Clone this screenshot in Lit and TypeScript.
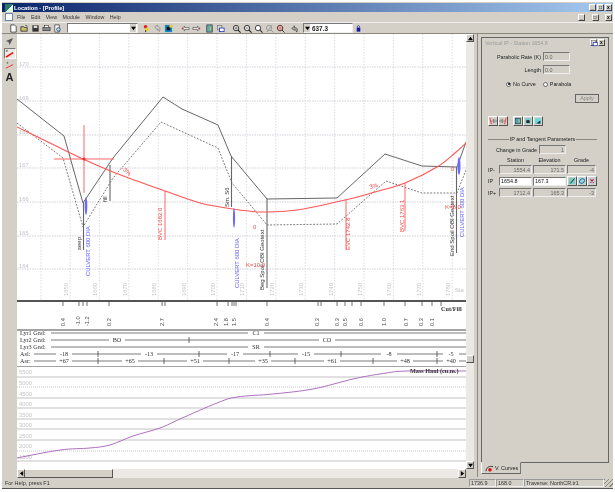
import {LitElement, html, svg, css} from 'lit';
import {customElement} from 'lit/decorators.js';

const ground = '17,99 64,136 83,203 113,158 163,97 182,109 218,125 231,156 267,199 337,198 385,154 422,166 457,167 466,142';
const original = '17,123 63,158 83,227 113,178 161,122 218,148 232,183 267,225 337,224 386,181 422,193 457,193 466,170';
const design = [[17, 127], [50, 143], [83, 159], [113, 172], [140, 182], [165, 191], [200, 203], [233, 209], [263, 212], [297, 210], [345, 200], [375, 192], [405, 183], [437, 167], [455, 153], [466, 143]];
const haul = [[17, 458], [60, 450], [90, 448], [110, 445], [133, 436], [160, 428], [180, 419], [217, 403], [237, 397], [273, 394], [313, 389], [353, 379], [380, 374], [407, 371], [466, 371]];

const stations = [1650, 1660, 1670, 1680, 1690, 1700, 1710, 1720, 1730, 1740, 1750, 1760, 1770, 1780];
const elevations = [[170, 67], [169, 101], [168, 135], [167, 168], [166, 202], [165, 236], [164, 269]];
const massLabels = [[5500, 374], [5000, 385], [4500, 396], [4000, 406], [3500, 417], [3000, 427], [2500, 438], [2000, 448], [1500, 459]];

// x, bottom y, text
const blueLabels: [number, number, string][] = [[90, 276, 'CULVERT 600 DIA'], [239, 288, 'CULVERT 600 DIA'], [464, 237, 'CULVERT 600 DIA']];
const blackLabels: [number, number, string][] = [[81, 250, 'seep'], [107, 202, 'fill'], [229, 207, 'Sm. S6'], [264, 290, 'Beg Spoil OBI Geotext'], [454, 256, 'End Spoil OBI Geotext']];
const redLabels: [number, number, string][] = [[162, 240, 'BVC 1682.0'], [350, 250, 'EVC 1742.8'], [404, 232, 'BVC 1763.1']];

const cutFill: [number, string][] = [[63, '0.4'], [78, '-1.0'], [87, '-1.2'], [109, '0.2'], [162, '2.7'], [216, '2.4'], [226, '1.8'], [234, '1.5'], [267, '0.4'], [317, '0.3'], [337, '0.3'], [345, '0.5'], [361, '0.6'], [384, '1.0'], [406, '0.7'], [421, '0.3'], [432, '0.1']];
const cutTicks = [63, 79, 83, 87, 109, 162, 165, 217, 228, 232, 234, 236, 267, 318, 321, 337, 345, 352, 361, 384, 405, 422, 432, 441];

const layerRows: {y: number; label: string; from: number; parts: [number, string][]; ticks: number[]}[] = [
  {y: 333, label: 'Lyr1 Gnd:', from: 51, parts: [[256, 'C1']], ticks: []},
  {y: 340, label: 'Lyr2 Gnd:', from: 51, parts: [[117, 'BO'], [327, 'CO']], ticks: [189]},
  {y: 347, label: 'Lyr3 Gnd:', from: 51, parts: [[256, 'SR']], ticks: []},
  {y: 354, label: 'Asl:', from: 34, parts: [[64, '-18'], [149, '-13'], [235, '-17'], [306, '-15'], [389, '-8'], [451, '-5']], ticks: [98, 199, 270, 341, 437]},
  {y: 361, label: 'Asr:', from: 34, parts: [[64, '+67'], [130, '+65'], [195, '+51'], [263, '+35'], [332, '+61'], [405, '+48'], [451, '+40']], ticks: [98, 164, 229, 295, 373, 437]},
];

// smooth line through the points
function smooth(p: number[][]) {
  let d = `M${p[0][0]} ${p[0][1]}`;
  for (let i = 0; i < p.length - 1; i++) {
    const a = p[Math.max(i - 1, 0)];
    const b = p[i];
    const c = p[i + 1];
    const e = p[Math.min(i + 2, p.length - 1)];
    d += `C${b[0] + (c[0] - a[0]) / 6} ${b[1] + (c[1] - a[1]) / 6} ${c[0] - (e[0] - b[0]) / 6} ${c[1] - (e[1] - b[1]) / 6} ${c[0]} ${c[1]}`;
  }
  return d;
}

const glyphs: Record<string, unknown> = {
  new: svg`<path d="M2 1h4l2 2v6H2z" fill="#fff" stroke="#222" stroke-width=".8"/>`,
  open: svg`<path d="M1 8V3h3l1 1h3v4z" fill="#c9c26a" stroke="#222" stroke-width=".8"/><path d="M6 1.500l2.500 1" stroke="#222" stroke-width=".8"/>`,
  save: svg`<rect x="1.500" y="1.500" width="7" height="7" fill="#333"/><rect x="3" y="2" width="4" height="2.500" fill="#ddd"/>`,
  print: svg`<rect x="1" y="4" width="8" height="3.500" fill="#888" stroke="#222" stroke-width=".6"/><rect x="3" y="1.500" width="4" height="2.500" fill="#fff" stroke="#222" stroke-width=".6"/>`,
  preview: svg`<path d="M2 1h5v8H2z" fill="#fff" stroke="#222" stroke-width=".7"/><circle cx="6" cy="6" r="2" fill="#bde" stroke="#135" stroke-width=".8"/>`,
  tag: svg`<circle cx="4" cy="3" r="2" fill="#e02020"/><circle cx="5.500" cy="6" r="2" fill="#f0d020"/><path d="M4 7v2" stroke="#222"/>`,
  undo: svg`<path d="M2 3l3-2v1.500c3 0 3.500 3 2 6-.5-2.500-1-3-2-3V7z" fill="#ccc" stroke="#777" stroke-width=".6"/>`,
  colors: svg`<rect x="1" y="1" width="8" height="8" fill="#18c"/><rect x="3" y="3" width="4" height="4" fill="#111"/><rect x="6" y="1" width="3" height="3" fill="#ec2"/>`,
  left: svg`<path d="M1 5l3-2.500V4h5v2H4v1.500z" fill="#fff" stroke="#222" stroke-width=".6"/><path d="M1 5h2" stroke="#e02020"/>`,
  right: svg`<path d="M9 5L6 2.500V4H1v2h5v1.500z" fill="#fff" stroke="#222" stroke-width=".6"/><path d="M7 5h2" stroke="#e02020"/>`,
  pages: svg`<rect x="2" y="1" width="6" height="8" fill="#6aa" stroke="#223" stroke-width=".7"/><path d="M6 3v4" stroke="#dc3"/>`,
  windows: svg`<rect x="1.500" y="1.500" width="5" height="5" fill="#ddd" stroke="#555" stroke-width=".6"/><rect x="4" y="4.500" width="5" height="4" fill="#fff" stroke="#12a" stroke-width=".8"/>`,
  zoomIn: svg`<circle cx="4.500" cy="4.500" r="3" fill="#eee" stroke="#222"/><path d="M6.500 6.500l3 3" stroke="#222" stroke-width="1.200"/><path d="M3 4.500h3M4.500 3v3" stroke="#222" stroke-width=".6"/>`,
  zoomOut: svg`<circle cx="4.500" cy="4.500" r="3" fill="#eee" stroke="#222"/><path d="M6.500 6.500l3 3" stroke="#222" stroke-width="1.200"/><path d="M3 4.500h3" stroke="#222" stroke-width=".6"/>`,
  zoom: svg`<circle cx="4.500" cy="4.500" r="3" fill="#fff" stroke="#333"/><path d="M6.500 6.500l3 3" stroke="#333" stroke-width="1.200"/>`,
  zoomOff: svg`<circle cx="4.500" cy="4.500" r="3" fill="none" stroke="#999"/><path d="M6.500 6.500l3 3M8 1L2 9" stroke="#999"/>`,
  zoomAll: svg`<circle cx="4.500" cy="4.500" r="3" fill="#fff" stroke="#222"/><path d="M1 4.500h7M4.500 1v7" stroke="#d02020" stroke-width=".8"/><path d="M6.500 6.500l3 3" stroke="#222"/>`,
  back: svg`<path d="M2 5l3-3v2c3 0 4 2 2.500 5-.5-2-1-2.500-2.500-2.500V7z" fill="#aaa" stroke="#222" stroke-width=".6"/>`,
  lock: svg`<rect x="3" y="4" width="4" height="4.500" fill="#1a1aa0"/><path d="M3.800 4V3a1.200 1.200 0 0 1 2.400 0v1" fill="none" stroke="#1a1aa0" stroke-width=".7"/>`,
  pointer: svg`<path d="M9 1L1 4.500l3 1 1 3.500z" fill="#555"/>`,
  redLine: svg`<path d="M1 9l8-5" stroke="#f00" stroke-width="1.500"/><path d="M1 1h2v2H1z" fill="#777"/>`,
  redThin: svg`<path d="M1 8l8-4" stroke="#f22" stroke-width="1"/><path d="M2 1h1.500v2H2z" fill="#777"/>`,
  ipLeft: svg`<path d="M1 1l2 8" stroke="#f22"/><path d="M3 5l3-2v4z M6 4h3v2H6z" fill="#fff" stroke="#222" stroke-width=".5"/>`,
  ipRight: svg`<path d="M9 1L7 9" stroke="#f22"/><path d="M7 5L4 3v4z M4 4H1v2h3z" fill="#fff" stroke="#222" stroke-width=".5"/>`,
  book: svg`<rect x="2" y="1.500" width="6" height="7" fill="#4ab" stroke="#123" stroke-width=".7"/><path d="M6.500 3v4" stroke="#fc3"/>`,
  cam: svg`<rect x="1.500" y="1.500" width="7" height="7" fill="#7cc"/><rect x="3" y="4" width="4" height="3.500" fill="#222"/>`,
  cam2: svg`<rect x="1.500" y="1.500" width="7" height="7" fill="#6dd"/><path d="M3 8h5V4.500z" fill="#123"/>`,
  edit: svg`<rect x="1" y="1" width="8" height="8" fill="#7cc"/><path d="M3 8l5-6" stroke="#222" stroke-width="1.200"/><path d="M2 3h2" stroke="#dc2"/>`,
  cycle: svg`<rect x="1" y="1" width="8" height="8" fill="#9dd"/><path d="M2.500 7.500A3.500 3.500 0 0 1 7 2.500M7.500 2.500A3.500 3.500 0 0 1 3 7.500" fill="none" stroke="#137" stroke-width="1"/>`,
  cross: svg`<rect x="1" y="1" width="8" height="8" fill="#bcd"/><path d="M3 3l4 4M7 3L3 7" stroke="#d01818" stroke-width="1.400"/>`,
  curves: svg`<path d="M1 8C2 3 5 2 9 3" fill="none" stroke="#222" stroke-width="1"/><circle cx="5.500" cy="6.500" r="2" fill="#e01010"/>`,
};

const icon = (name: string) => html`<svg class="glyph" viewBox="0 0 10 10">${glyphs[name]}</svg>`;
const cell = (name: string) => html`<span class="cell">${icon(name)}</span>`;
const tool = (name: string) => html`<span class="tool">${icon(name)}</span>`;
const arrow = (d: string) => html`<svg class="arrow" viewBox="0 0 6 6"><path d=${d} fill="#000"/></svg>`;
const vtext = (x: number, y: number, t: string, cls: string) =>
  svg`<text class=${cls} transform="translate(${x} ${y}) rotate(-90)">${t}</text>`;

@customElement('app-root')
export class AppRoot extends LitElement {
  static styles = css`
    :host {
      display: block;
      width: 615px;
      height: 492px;
      background: #fff;
      overflow: hidden;
      font-family: "Liberation Sans", Arial, sans-serif;
      font-size: 5.400px;
      color: #222;
    }
    .win {
      width: 611px;
      height: 486px;
      margin: 2px 0 0 2px;
      background: #d4d0c8;
      border-bottom: 1px solid #555;
      display: flex;
      flex-direction: column;
      filter: blur(0.3px);
    }
    .title {
      height: 9px;
      margin-top: 1px;
      background: linear-gradient(90deg, #0a246a, #a6caf0);
      color: #fff;
      font-weight: bold;
      font-size: 5.700px;
      display: flex;
      align-items: center;
      padding: 0 1px 0 3px;
    }
    .logo { width: 8px; height: 8px; margin-right: 1px; background: linear-gradient(135deg, #2a7a6a 50%, #dfe 50%); }
    .spacer { flex: 1; }
    .capbtn {
      width: 7px;
      height: 7px;
      margin-left: 1px;
      background: #d4d0c8;
      border: 1px solid;
      border-color: #fff #444 #444 #fff;
      box-sizing: border-box;
      font-size: 5px;
      line-height: 5px;
      text-align: center;
      color: #000;
      font-weight: bold;
      overflow: hidden;
    }
    .menu {
      height: 10px;
      display: flex;
      align-items: center;
      gap: 5.500px;
      padding: 0 1px 0 3px;
      color: #333;
      font-size: 5.300px;
    }
    .menu .doc { width: 8px; height: 8px; margin-right: -1.500px; background: #fff; border: 1px solid #68a; box-sizing: border-box; }
    .bar {
      height: 12px;
      box-sizing: border-box;
      display: flex;
      align-items: center;
      padding-left: 6px;
      border-top: 1px solid #f2f0ec;
      border-bottom: 1px solid #8a877f;
    }
    .cell { width: 11px; height: 10px; display: flex; align-items: center; justify-content: center; flex: none; }
    .glyph { width: 9px; height: 9px; display: block; flex: none; }
    .combo {
      height: 10px;
      background: #fff;
      border: 1px solid;
      border-color: #777 #eee #eee #777;
      box-sizing: border-box;
      display: flex;
      justify-content: flex-end;
      align-items: stretch;
      flex: none;
    }
    .combo.wide { width: 71px; margin: 0 3px 0 4px; }
    .combo.num { width: 50px; margin-left: 3px; justify-content: flex-start; font-weight: bold; font-size: 6.400px; color: #222; align-items: center; }
    .combo .drop { width: 6px; background: #d4d0c8; display: flex; align-items: center; justify-content: center; margin-right: 1px; }
    .combo.num .drop { margin: 0 2px 0 0; align-self: stretch; }
    .arrow { width: 5px; height: 5px; display: block; }
    .g6 { margin-left: 6px; }
    .g2 { margin-left: 2px; }
    .g5 { margin-left: 5px; }
    .g3 { margin-left: 3px; }
    .main { flex: 1; display: flex; min-height: 0; }
    .tools { width: 15px; flex: none; display: flex; flex-direction: column; align-items: center; padding-top: 2px; gap: 1px; box-sizing: border-box; }
    .tool { width: 12px; height: 11px; background: #d4d0c8; display: flex; align-items: center; justify-content: center; }
    .tool:nth-child(2) { background: #ebe9e4; border: 1px solid; border-color: #777 #fff #fff #777; box-sizing: border-box; }
    .tool.type { font-size: 11px; height: 9px; font-weight: bold; color: #222; }
    .center { width: 457px; flex: none; display: flex; flex-direction: column; }
    .canvas-row { height: 435px; display: flex; }
    .canvas { width: 449px; background: #fff; display: flex; flex-direction: column; }
    .band { display: block; width: 449px; flex: none; box-sizing: content-box; }
    .b-profile { height: 266px; }
    .b-cut { height: 27px; border-top: 2px solid #555; }
    .b-layers { height: 35px; border-top: 2px solid #a4a4a4; }
    .b-haul { height: 102px; border-top: 1px solid #a4a4a4; }
    .vscroll { width: 8px; background: #ece9e4; display: flex; flex-direction: column; }
    .sbtn {
      background: #d4d0c8;
      border: 1px solid;
      border-color: #fff #555 #555 #fff;
      box-sizing: border-box;
      display: flex;
      align-items: center;
      justify-content: center;
      flex: none;
    }
    .vscroll .sbtn { width: 8px; height: 8px; }
    .vscroll .track { height: 313px; flex: none; }
    .vscroll .fill { flex: 1; }
    .hscroll { height: 9px; display: flex; background: #ece9e4; width: 449px; }
    .hscroll .sbtn { width: 8px; height: 9px; }
    .thumb { width: 88px; flex: none; background: #d4d0c8; border-right: 1px solid #555; border-bottom: 1px solid #555; border-top: 1px solid #fff; box-sizing: border-box; }
    .hscroll .fill { flex: 1; }
    .panel {
      flex: 1;
      padding: 3px 4px 0 3px;
      display: flex;
      flex-direction: column;
      border-left: 1px solid #888;
      margin-left: 3px;
      box-sizing: border-box;
    }
    .frame {
      height: 426px;
      width: 128px;
      border: 1px solid #666;
      box-sizing: border-box;
      padding: 0 3px;
      display: flex;
      flex-direction: column;
    }
    .cap { height: 9px; display: flex; align-items: center; color: #9a9a9a; font-size: 5.300px; }
    .form { display: grid; grid-template-columns: 56px 27px; column-gap: 2px; row-gap: 4px; align-items: center; justify-items: end; margin-top: 5px; }
    .form .lbl { white-space: nowrap; }
    .box {
      height: 9px;
      box-sizing: border-box;
      border: 1px solid;
      border-color: #777 #eee #eee #777;
      background: #d4d0c8;
      color: #666;
      display: flex;
      align-items: center;
      padding: 0 1px;
      width: 100%;
    }
    .box.r { justify-content: flex-end; }
    .box.w { background: #fff; color: #111; }
    .radios { display: flex; margin: 7px 0 0 21px; align-items: center; }
    .radio { width: 5px; height: 5px; border-radius: 50%; background: #fff; border: 1px solid #666; box-sizing: border-box; margin-right: 2px; display: flex; align-items: center; justify-content: center; }
    .radio i { width: 2px; height: 2px; border-radius: 50%; background: #000; }
    .radios span + .radio { margin-left: 7px; }
    .apply {
      align-self: flex-end;
      width: 24px;
      height: 9px;
      margin: 7px 6px 0 0;
      border: 1px solid;
      border-color: #fff #333 #333 #fff;
      outline: 1px solid #666;
      outline-offset: -1px;
      box-sizing: border-box;
      text-align: center;
      line-height: 7px;
      color: #888;
    }
    .ibar { display: flex; margin: 13px 0 0 3px; }
    .ibtn { width: 10px; height: 10px; display: flex; align-items: center; justify-content: center; background: #d4d0c8; border: 1px solid; border-color: #fff #555 #555 #fff; box-sizing: border-box; flex: none; }
    .ibtn.small { width: 7px; height: 7px; }
    .ibtn .glyph { width: 8px; height: 8px; }
    .ibar .gap { width: 5px; }
    .section { display: flex; align-items: center; margin: 10px 8px 0 3px; gap: 1px; white-space: nowrap; }
    .section i { flex: 1; height: 1px; background: #8a877f; }
    .form.grade { grid-template-columns: 52px 27px; margin-top: 3px; }
    .params { display: grid; grid-template-columns: 10px 33px 33px 29px; column-gap: 1px; row-gap: 2px; margin: 3px 0 0 3px; align-items: center; }
    .params .h { text-align: center; }
    .params .tri { display: flex; }
    .tabs { height: 12px; display: flex; }
    .tab {
      width: 40px;
      height: 12px;
      border: 1px solid;
      border-color: transparent #777 #666 #fff;
      box-sizing: border-box;
      display: flex;
      align-items: center;
      gap: 1px;
      padding-left: 3px;
      margin-top: -1px;
      background: #d4d0c8;
      white-space: nowrap;
    }
    .status { height: 11px; display: flex; align-items: center; padding-left: 3px; color: #333; }
    .status .msg { flex: 1; }
    .sunk { height: 8px; border: 1px solid; border-color: #999 #eee #eee #999; box-sizing: border-box; display: flex; align-items: center; padding-left: 1px; }
    .s1 { width: 27px; }
    .s2 { width: 28px; }
    .s3 { width: 80px; }
    .grip { width: 9px; height: 8px; background: repeating-linear-gradient(135deg, #8a877f 0 1px, #d4d0c8 1px 3px); }
    text { font-family: "Liberation Sans", Arial, sans-serif; }
    .t { font-size: 6px; }
    .gridlbl { font-size: 5.800px; fill: #c4c4c4; }
    .blk { fill: #333; }
    .blu { fill: #5a5aff; font-size: 5.900px; }
    .red { fill: #f34a4a; }
    .cf { font-size: 5.600px; fill: #444; }
    .lay { font-family: "Liberation Serif", serif; font-size: 6.200px; fill: #333; }
  `;

  renderProfile() {
    return html`<svg class="band b-profile" viewBox="17 34 449 266">
      ${stations.map((_, i) => svg`<line x1=${70 + i * 29.4} x2=${70 + i * 29.4} y1="34" y2="300" stroke="#cfcfd6" stroke-width=".7" stroke-dasharray="1.500 1.500"/>`)}
      <line x1="41" x2="41" y1="34" y2="300" stroke="#cfcfd6" stroke-width=".7" stroke-dasharray="1.500 1.500"/>
      ${elevations.map(([lbl, y]) => svg`
        <line x1="17" x2="466" y1=${y} y2=${y} stroke="#c6c6d0" stroke-width=".8" stroke-dasharray="1.500 1"/>
        <text class="gridlbl" x="19" y=${y - 1}>${lbl}</text>`)}
      ${stations.map((s, i) => vtext(68 + i * 29.4, 296, String(s), 'gridlbl'))}
      <text class="gridlbl" x="455" y="292">Sta</text>

      <polyline points=${original} fill="none" stroke="#555" stroke-width=".8" stroke-dasharray="1.800 1.500"/>
      <polyline points=${ground} fill="none" stroke="#555" stroke-width=".9"/>

      <g stroke="#666" stroke-width="1.100">
        <line x1="83.500" x2="83.500" y1="203" y2="250"/>
        <line x1="110" x2="110" y1="165" y2="201"/>
        <line x1="231.500" x2="231.500" y1="156" y2="207"/>
        <line x1="267" x2="267" y1="199" y2="288"/>
        <line x1="456.500" x2="456.500" y1="167" y2="253"/>
      </g>

      <path d=${smooth(design)} fill="none" stroke="#f55" stroke-width="1.100"/>
      <g stroke="#f55" stroke-width=".9">
        <line x1="84" x2="84" y1="125" y2="193"/>
        <line x1="54" x2="114" y1="159" y2="159"/>
        <line x1="165" x2="165" y1="191" y2="240"/>
        <line x1="346" x2="346" y1="200" y2="250"/>
        <line x1="405" x2="405" y1="183" y2="231"/>
      </g>
      <circle cx="84" cy="159" r="1.500" fill="#f22"/>

      <g fill="#6a6aff">
        <ellipse cx="86" cy="206" rx="1.300" ry="9"/>
        <ellipse cx="234" cy="218" rx="1.100" ry="10"/>
        <ellipse cx="459" cy="166" rx="1.500" ry="9"/>
      </g>

      ${blackLabels.map(([x, y, t]) => vtext(x, y, t, 't blk'))}
      ${blueLabels.map(([x, y, t]) => vtext(x, y, t, 't blu'))}
      ${redLabels.map(([x, y, t]) => vtext(x, y, t, 't red'))}
      <text class="t red" transform="translate(121 169) rotate(40)">-3%</text>
      <text class="t red" transform="translate(370 189) rotate(-15)">3%</text>
      <text class="t red" x="246" y="267">K=10.0</text>
      <text class="t red" x="445" y="209">K=8.0</text>
      <text class="t red" x="253" y="229">0</text>
      <text class="t red" x="451" y="171">0</text>
    </svg>`;
  }

  renderCutFill() {
    return html`<svg class="band b-cut" viewBox="17 302 449 27">
      ${cutTicks.map((x) => svg`<line x1=${x} x2=${x} y1="302" y2="306" stroke="#333" stroke-width=".7"/>`)}
      ${cutFill.map(([x, t]) => vtext(x + 2, 326, t, 'cf'))}
      <text class="lay" x="441" y="311" font-weight="bold">Cut/Fill</text>
    </svg>`;
  }

  renderLayers() {
    return html`<svg class="band b-layers" viewBox="17 331 449 35">
      ${layerRows.map((r) => svg`
        <text class="lay" x="20" y=${r.y + 2}>${r.label}</text>
        <line x1=${r.from} x2="466" y1=${r.y} y2=${r.y} stroke="#444" stroke-width=".7"/>
        ${r.parts.map(([x, t]) => svg`
          <rect x=${x - 8} y=${r.y - 3} width="16" height="6" fill="#fff"/>
          <text class="lay" x=${x} y=${r.y + 2} text-anchor="middle">${t}</text>`)}
        ${r.ticks.map((x) => svg`<line x1=${x} x2=${x} y1=${r.y - 3} y2=${r.y + 3} stroke="#444" stroke-width=".8"/>`)}`)}
    </svg>`;
  }

  renderHaul() {
    const solid = [377, 398, 408, 419, 429, 440, 461];
    const dotted = [387, 451];
    return html`<svg class="band b-haul" viewBox="17 367 449 102">
      ${solid.map((y) => svg`<line x1="17" x2="466" y1=${y} y2=${y} stroke="#c2c2c2" stroke-width="1"/>`)}
      ${dotted.map((y) => svg`<line x1="17" x2="466" y1=${y} y2=${y} stroke="#bbb" stroke-width=".8" stroke-dasharray="1 1"/>`)}
      ${massLabels.map(([v, y]) => svg`<text class="gridlbl" x="19" y=${y}>${v}</text>`)}
      <path d=${smooth(haul)} fill="none" stroke="#b070c0" stroke-width="1"/>
      <text class="lay" x="410" y="373" font-weight="bold">Mass Haul (cu.m.)</text>
    </svg>`;
  }

  renderPanel() {
    const rows: [string, string, string, string][] = [
      ['IP-', '1554.4', '171.5', '-4'],
      ['IP+', '1712.4', '165.3', '-3'],
    ];
    const readonly = (r: [string, string, string, string]) => html`
      <span>${r[0]}</span>
      <span class="box r">${r[1]}</span>
      <span class="box r">${r[2]}</span>
      <span class="box r">${r[3]}</span>`;
    return html`<div class="panel">
      <div class="frame">
        <div class="cap">
          Vertical IP - Station 1654.8
          <span class="spacer"></span>
          <span class="ibtn small">${icon('windows')}</span>
          <span class="capbtn">x</span>
        </div>
        <div class="form">
          <span class="lbl">Parabolic Rate (K)</span><span class="box">0.0</span>
          <span class="lbl">Length</span><span class="box">0.0</span>
        </div>
        <div class="radios">
          <span class="radio"><i></i></span><span>No Curve</span>
          <span class="radio"></span><span>Parabola</span>
        </div>
        <div class="apply">Apply</div>
        <div class="ibar">
          <span class="ibtn">${icon('ipLeft')}</span><span class="ibtn">${icon('ipRight')}</span>
          <span class="gap"></span>
          <span class="ibtn">${icon('book')}</span><span class="ibtn">${icon('cam')}</span><span class="ibtn">${icon('cam2')}</span>
        </div>
        <div class="section"><i></i>IP and Tangent Parameters<i></i></div>
        <div class="form grade">
          <span class="lbl">Change in Grade</span><span class="box r">1</span>
        </div>
        <div class="params">
          <span></span><span class="h">Station</span><span class="h">Elevation</span><span class="h">Grade</span>
          ${readonly(rows[0])}
          <span>IP</span>
          <span class="box w">1654.8</span>
          <span class="box w">167.3</span>
          <span class="tri"><span class="ibtn">${icon('edit')}</span><span class="ibtn">${icon('cycle')}</span><span class="ibtn">${icon('cross')}</span></span>
          ${readonly(rows[1])}
        </div>
      </div>
      <div class="tabs">
        <div class="tab">${icon('curves')}<span>V. Curves</span></div>
      </div>
    </div>`;
  }

  render() {
    return html`<div class="win">
      <div class="title">
        <span class="logo"></span>Location - [Profile]
        <span class="spacer"></span>
        <span class="capbtn">_</span><span class="capbtn">□</span><span class="capbtn">x</span>
      </div>
      <div class="menu">
        <span class="doc"></span>
        <span>File</span><span>Edit</span><span>View</span><span>Module</span><span>Window</span><span>Help</span>
        <span class="spacer"></span>
        <span class="capbtn">_</span><span class="capbtn">□</span><span class="capbtn">x</span>
      </div>
      <div class="bar">
        ${['new', 'open', 'save', 'print', 'preview'].map(cell)}
        <span class="combo wide"><span class="drop">${arrow('M0 1h6L3 5z')}</span></span>
        ${['tag', 'undo', 'colors'].map(cell)}
        <span class="g6"></span>${['left', 'right'].map(cell)}
        <span class="g2"></span>${['pages', 'windows'].map(cell)}
        <span class="g5"></span>${['zoomIn', 'zoomOut', 'zoom', 'zoomOff', 'zoomAll'].map(cell)}
        <span class="g3"></span>${cell('back')}
        <span class="combo num"><span class="drop">${arrow('M0 1h6L3 5z')}</span>637.3</span>
        ${cell('lock')}
      </div>
      <div class="main">
        <div class="tools">
          ${tool('pointer')}${tool('redLine')}${tool('redThin')}
          <span class="tool type">A</span>
        </div>
        <div class="center">
          <div class="canvas-row">
            <div class="canvas">
              ${this.renderProfile()}
              ${this.renderCutFill()}
              ${this.renderLayers()}
              ${this.renderHaul()}
            </div>
            <div class="vscroll">
              <span class="sbtn">${arrow('M0 5h6L3 1z')}</span>
              <span class="track"></span>
              <span class="sbtn"></span>
              <span class="fill"></span>
              <span class="sbtn">${arrow('M0 1h6L3 5z')}</span>
            </div>
          </div>
          <div class="hscroll">
            <span class="sbtn">${arrow('M5 0v6L1 3z')}</span>
            <span class="thumb"></span>
            <span class="fill"></span>
            <span class="sbtn">${arrow('M1 0v6l4-3z')}</span>
          </div>
        </div>
        ${this.renderPanel()}
      </div>
      <div class="status">
        <span class="msg">For Help, press F1</span>
        <span class="sunk s1">1736.9</span><span class="sunk s2">168.0</span><span class="sunk s3">Traverse: NorthCR.tr1</span>
        <span class="grip"></span>
      </div>
    </div>`;
  }
}
